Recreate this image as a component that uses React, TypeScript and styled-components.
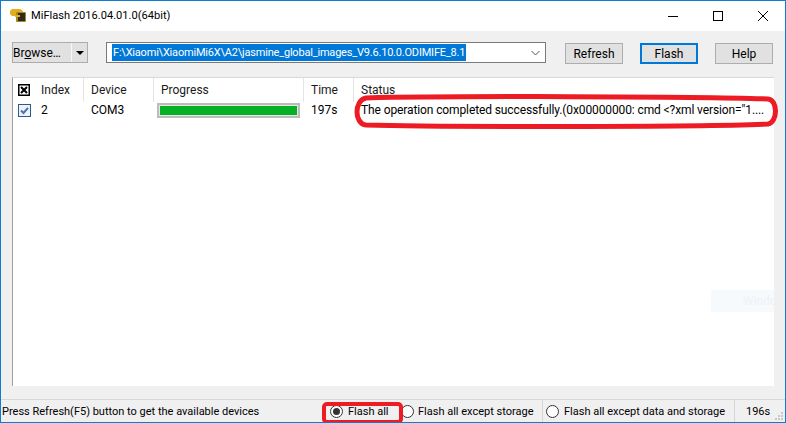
import React from 'react';
import styled, { createGlobalStyle } from 'styled-components';

const Global = createGlobalStyle`
  html, body { margin: 0; padding: 0; background: #fff; }
  #root { width: 786px; height: 423px; overflow: hidden; }
`;

const Win = styled.div`
  position: relative;
  box-sizing: border-box;
  width: 786px;
  height: 423px;
  border: 1px solid #0f7ccf;
  background: #f0f0f0;
  display: flex;
  flex-direction: column;
  font-family: Roboto, "Noto Sans", sans-serif;
  font-size: 12px;
  color: #000;
  overflow: hidden;
`;
const TitleBar = styled.div`
  height: 30px;
  flex: none;
  background: #fff;
  display: flex;
  align-items: center;
  padding-left: 9px;
`;
const AppIcon = styled.svg`
  width: 17px;
  height: 16px;
  margin-right: 4px;
  margin-top: -2px;
`;
const Title = styled.div`
  font-size: 11.1px;
  flex: 1;
  margin-top: -1px;
`;
const WinBtn = styled.div`
  width: 45px;
  height: 30px;
  display: flex;
  align-items: center;
  justify-content: center;
  svg { display: block; }
`;
const Toolbar = styled.div`
  height: 46px;
  flex: none;
  display: flex;
  align-items: flex-start;
  padding: 11px 0 0 11px;
  box-sizing: border-box;
`;
const SplitBtn = styled.div`
  width: 76px;
  height: 21px;
  display: flex;
  box-sizing: border-box;
  border: 1px solid #adadad;
  background: #e1e1e1;
`;
const SplitMain = styled.div`
  width: 58px;
  border-right: 1px solid #f8f8f8;
  line-height: 20px;
  white-space: nowrap;
`;
const SplitArrow = styled.div`
  flex: 1;
  display: flex;
  align-items: center;
  justify-content: center;
  &::before {
    content: '';
    border-left: 4px solid transparent;
    border-right: 4px solid transparent;
    border-top: 4px solid #000;
  }
`;
const Combo = styled.div`
  width: 440px;
  height: 21px;
  margin-left: 18px;
  box-sizing: border-box;
  border: 1px solid #7a7a7a;
  background: #fff;
  display: flex;
  align-items: center;
  padding-left: 5px;
  position: relative;
`;
const Selected = styled.span`
  background: #0078d7;
  color: #fff;
  line-height: 17px;
  padding: 0 1px;
  white-space: nowrap;
  font-size: 11px;
  letter-spacing: -0.2px;
`;
const Chevron = styled.svg`
  position: absolute;
  right: 5px;
  top: 7px;
`;
const Btn = styled.div<{ $left: number; $focus?: boolean }>`
  width: 58px;
  height: 21px;
  margin-top: 1px;
  margin-left: ${p => p.$left}px;
  box-sizing: border-box;
  border: ${p => (p.$focus ? '2px solid #0078d7' : '1px solid #adadad')};
  background: #e1e1e1;
  display: flex;
  align-items: center;
  justify-content: center;
`;
const List = styled.div`
  flex: none;
  width: 762px;
  height: 309px;
  margin-left: 11px;
  box-sizing: border-box;
  background: #fff;
  border-left: 1px solid #a0a0a0;
  border-top: 1px solid #d9d9d9;
  position: relative;
`;
const HeadRow = styled.div`
  display: grid;
  grid-template-columns: 21px 50px 70px 150px 50px 1fr;
  height: 22px;
`;
const HeadCell = styled.div`
  border-right: 1px solid #e5e5e5;
  padding-left: 7px;
  line-height: 24px;
  white-space: nowrap;
  color: #1a1a1a;
  &:last-child { border-right: 0; }
`;
const HeadCheck = styled.div`
  padding: 6px 0 0 5px;
`;
const BodyRow = styled.div`
  display: grid;
  grid-template-columns: 21px 50px 70px 150px 50px 1fr;
  height: 20px;
  align-items: center;
`;
const CheckCell = styled.div`
  padding-left: 5px;
`;
const Cell = styled.div`
  padding-left: 7px;
  white-space: nowrap;
`;
const StatusText = styled(Cell)`
  letter-spacing: -0.11px;
`;
const ProgressTrack = styled.div`
  width: 143px;
  height: 15px;
  margin-left: 3px;
  box-sizing: border-box;
  border: 2px solid #bcbcbc;
  padding: 1px;
  background: #e6e6e6;
`;
const ProgressFill = styled.div`
  height: 100%;
  background: #06b025;
`;
const Watermark = styled.div`
  position: absolute;
  right: 0;
  top: 212px;
  width: 63px;
  height: 22px;
  background: #f6fafd;
  color: #eef1f4;
  line-height: 22px;
  padding-left: 32px;
  box-sizing: border-box;
  overflow: hidden;
`;
const Spacer = styled.div`
  flex: 1;
`;
const StatusBar = styled.div`
  height: 22px;
  flex: none;
  border-top: 1px solid #d7d7d7;
  display: flex;
  align-items: center;
  position: relative;
  font-size: 11px;
`;
const Pane = styled.div<{ $w: number; $sep?: boolean; $pad: number }>`
  width: ${p => p.$w}px;
  padding-left: ${p => p.$pad}px;
  flex: none;
  height: 100%;
  display: flex;
  align-items: center;
  box-sizing: border-box;
  white-space: nowrap;
  padding-top: 1px;
  border-right: ${p => (p.$sep ? '1px solid #d7d7d7' : '0')};
`;
const Radio = styled.span<{ $on?: boolean; $gap: number }>`
  width: 13px;
  height: 13px;
  flex: none;
  box-sizing: border-box;
  border: 1px solid #333;
  border-radius: 50%;
  background: #fff;
  display: inline-flex;
  align-items: center;
  justify-content: center;
  margin-right: ${p => p.$gap}px;
  &::after {
    content: '';
    display: ${p => (p.$on ? 'block' : 'none')};
    width: 7px;
    height: 7px;
    border-radius: 50%;
    background: #333;
  }
`;
const Grip = styled.svg`
  position: absolute;
  right: 1px;
  bottom: 1px;
`;
const Marks = styled.svg`
  position: absolute;
  left: -1px;
  top: -1px;
  pointer-events: none;
`;
const BoxIcon = styled.svg`
  display: block;
`;

const Box = ({ crossed }: { crossed?: boolean }) =>
  crossed ? (
    <BoxIcon width="12" height="12" viewBox="0 0 12 12">
      <rect x=".75" y=".75" width="10.5" height="10.5" fill="#fff" stroke="#000" strokeWidth="1.5" />
      <path d="M3 3l6 6M9 3l-6 6" stroke="#000" strokeWidth="2" />
    </BoxIcon>
  ) : (
    <BoxIcon width="13" height="13" viewBox="0 0 13 13">
      <rect x=".5" y=".5" width="12" height="12" fill="#eef1f6" stroke="#2b5a8c" />
      <path d="M3 6.5l2.5 2.5L10 3.8" fill="none" stroke="#4a74b0" strokeWidth="2" />
    </BoxIcon>
  );

export default function App() {
  return (
    <>
      <Global />
      <Win>
        <TitleBar>
          <AppIcon viewBox="0 0 17 16">
            <path d="M2 2h8l3 2v5H2L0 7V4z" fill="#e0ae22" />
            <rect x="6" y="5" width="10" height="10" rx="1" fill="#a8861e" />
            <rect x="8" y="6" width="7" height="8" fill="#2c2a24" />
            <path d="M5 8h5v2H5z" fill="#e0ae22" />
          </AppIcon>
          <Title>MiFlash 2016.04.01.0(64bit)</Title>
          <WinBtn>
            <svg width="10" height="10"><path d="M0 5.5h10" stroke="#000" /></svg>
          </WinBtn>
          <WinBtn>
            <svg width="10" height="10"><rect x=".5" y=".5" width="9" height="9" fill="none" stroke="#000" /></svg>
          </WinBtn>
          <WinBtn>
            <svg width="10" height="10"><path d="M0 0l10 10M10 0L0 10" stroke="#000" /></svg>
          </WinBtn>
        </TitleBar>
        <Toolbar>
          <SplitBtn>
            <SplitMain>Br<u>o</u>wse…</SplitMain>
            <SplitArrow />
          </SplitBtn>
          <Combo>
            <Selected>F:\Xiaomi\XiaomiMi6X\A2\jasmine_global_images_V9.6.10.0.ODIMIFE_8.1</Selected>
            <Chevron width="9" height="6" viewBox="0 0 9 6">
              <path d="M.5 1l4 4 4-4" fill="none" stroke="#555" />
            </Chevron>
          </Combo>
          <Btn $left={19}>Refresh</Btn>
          <Btn $left={17} $focus>Flash</Btn>
          <Btn $left={17}>Help</Btn>
        </Toolbar>
        <List>
          <HeadRow>
            <HeadCheck><Box crossed /></HeadCheck>
            <HeadCell>Index</HeadCell>
            <HeadCell>Device</HeadCell>
            <HeadCell>Progress</HeadCell>
            <HeadCell>Time</HeadCell>
            <HeadCell>Status</HeadCell>
          </HeadRow>
          <BodyRow>
            <CheckCell><Box /></CheckCell>
            <Cell>2</Cell>
            <Cell>COM3</Cell>
            <ProgressTrack><ProgressFill /></ProgressTrack>
            <Cell>197s</Cell>
            <StatusText>The operation completed successfully.(0x00000000: cmd &lt;?xml version="1....</StatusText>
          </BodyRow>
          <Watermark>Windows</Watermark>
        </List>
        <Spacer />
        <StatusBar>
          <Pane $w={329} $pad={1}>Press Refresh(F5) button to get the available devices</Pane>
          <Pane $w={71} $pad={0}><Radio $on $gap={5} />Flash all</Pane>
          <Pane $w={142} $pad={0} $sep><Radio $gap={4} />Flash all except storage</Pane>
          <Pane $w={192} $pad={3} $sep><Radio $gap={5} />Flash all except data and storage</Pane>
          <Pane $w={40} $pad={11}>196s</Pane>
          <Grip width="10" height="10" viewBox="0 0 10 10">
            <path d="M7 1h2v2H7zM4 4h2v2H4zM7 4h2v2H7zM1 7h2v2H1zM4 7h2v2H4zM7 7h2v2H7z" fill="#c8c8c8" />
          </Grip>
        </StatusBar>
        <Marks width="786" height="423" viewBox="0 0 786 423">
          <path d="M366 98C440 96 700 96 768 99C778 100 778 122 768 124C700 127 430 127 366 125C354 124 354 100 366 98Z" fill="none" stroke="#ed1c24" strokeWidth="5" />
          <rect x="324" y="404" width="77" height="18" rx="3" fill="none" stroke="#ed1c24" strokeWidth="4" />
        </Marks>
      </Win>
    </>
  );
}
